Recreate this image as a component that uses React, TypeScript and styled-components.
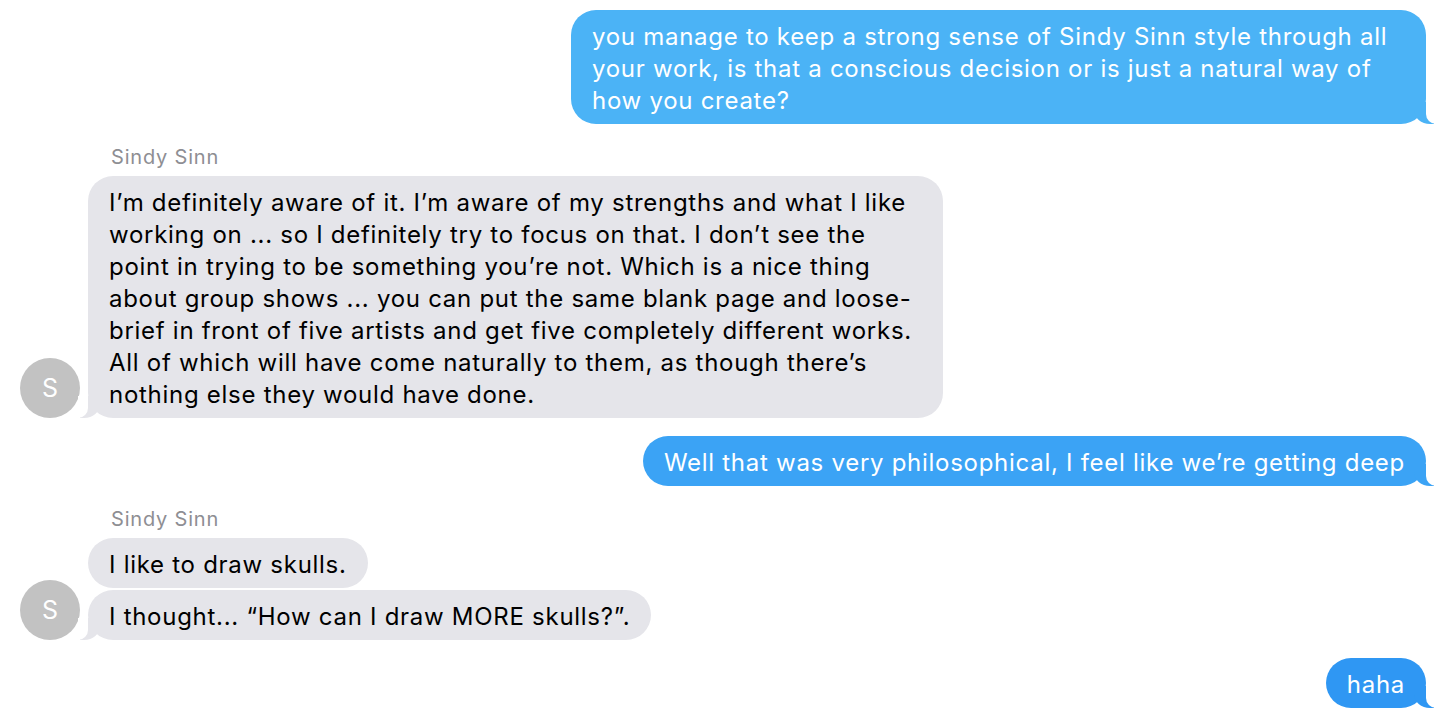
import React from "react";
import styled, { createGlobalStyle, css } from "styled-components";

const Global = createGlobalStyle`
  html, body { margin: 0; padding: 0; background: #ffffff; }
  body { font-family: Inter, "Liberation Sans", Arial, sans-serif; -webkit-font-smoothing: antialiased; }
`;

const Thread = styled.div`
  display: flex;
  flex-direction: column;
  padding: 10px 28px 16px 20px;
  width: 1454px;
  box-sizing: border-box;
`;

const SentRow = styled.div<{ $mt: number }>`
  display: flex;
  justify-content: flex-end;
  margin-top: ${(p) => p.$mt}px;
`;

const Group = styled.div<{ $mt: number }>`
  display: grid;
  grid-template-columns: 60px 1fr;
  column-gap: 8px;
  margin-top: ${(p) => p.$mt}px;
`;

const Name = styled.div`
  grid-column: 2;
  padding-left: 23px;
  font-size: 20px;
  line-height: 24px;
  letter-spacing: 0.8px;
  color: #8e8e93;
  margin-bottom: 7px;
`;

const Stack = styled.div`
  grid-column: 2;
  grid-row: 2;
  display: flex;
  flex-direction: column;
  align-items: flex-start;
  gap: 2px;
`;

const Avatar = styled.div`
  grid-column: 1;
  grid-row: 2;
  align-self: end;
  width: 60px;
  height: 60px;
  border-radius: 50%;
  background: #c2c2c2;
  color: #ffffff;
  display: flex;
  align-items: center;
  justify-content: center;
  font-size: 25px;
  line-height: 1;
`;

const Bubble = styled.div<{ $sent?: boolean; $tail?: boolean; $bg: string; $w?: number }>`
  position: relative;
  box-sizing: border-box;
  padding: 11px 21px 7px;
  border-radius: 25px;
  font-size: 24px;
  line-height: 32px;
  letter-spacing: 0.72px;
  background: ${(p) => p.$bg};
  color: ${(p) => (p.$sent ? "#ffffff" : "#000000")};
  white-space: nowrap;
  ${(p) => (p.$w ? `width: ${p.$w}px;` : "")}
  ${(p) =>
    p.$tail &&
    (p.$sent
      ? css`
          &::before {
            content: "";
            position: absolute;
            bottom: 0;
            right: -8px;
            width: 20px;
            height: 22px;
            background: ${p.$bg};
            border-bottom-left-radius: 16px 14px;
          }
          &::after {
            content: "";
            position: absolute;
            bottom: 0;
            right: -10px;
            width: 10px;
            height: 22px;
            background: #ffffff;
            border-bottom-left-radius: 10px;
          }
        `
      : css`
          &::before {
            content: "";
            position: absolute;
            bottom: 0;
            left: -8px;
            width: 20px;
            height: 22px;
            background: ${p.$bg};
            border-bottom-right-radius: 16px 14px;
          }
          &::after {
            content: "";
            position: absolute;
            bottom: 0;
            left: -10px;
            width: 10px;
            height: 22px;
            background: #ffffff;
            border-bottom-right-radius: 10px;
          }
        `)}
`;

const Line = styled.span`
  display: block;
`;

const GRAY = "#e5e5ea";

const Lines = ({ lines }: { lines: string[] }) => (
  <>
    {lines.map((l, i) => (
      <Line key={i}>{l}</Line>
    ))}
  </>
);

export default function App() {
  return (
    <>
      <Global />
      <Thread>
        <SentRow $mt={0}>
          <Bubble $sent $tail $bg="#4bb3f6" $w={855}>
            <Lines
              lines={[
                "you manage to keep a strong sense of Sindy Sinn style through all",
                "your work, is that a conscious decision or is just a natural way of",
                "how you create?",
              ]}
            />
          </Bubble>
        </SentRow>

        <Group $mt={21}>
          <Name>Sindy Sinn</Name>
          <Stack>
            <Bubble $tail $bg={GRAY} $w={855}>
              <Lines
                lines={[
                  "I’m definitely aware of it. I’m aware of my strengths and what I like",
                  "working on ... so I definitely try to focus on that. I don’t see the",
                  "point in trying to be something you’re not. Which is a nice thing",
                  "about group shows ... you can put the same blank page and loose-",
                  "brief in front of five artists and get five completely different works.",
                  "All of which will have come naturally to them, as though there’s",
                  "nothing else they would have done.",
                ]}
              />
            </Bubble>
          </Stack>
          <Avatar>S</Avatar>
        </Group>

        <SentRow $mt={18}>
          <Bubble $sent $tail $bg="#3ba3f5">
            Well that was very philosophical, I feel like we’re getting deep
          </Bubble>
        </SentRow>

        <Group $mt={21}>
          <Name>Sindy Sinn</Name>
          <Stack>
            <Bubble $bg={GRAY}>I like to draw skulls.</Bubble>
            <Bubble $tail $bg={GRAY}>
              I thought... “How can I draw MORE skulls?”.
            </Bubble>
          </Stack>
          <Avatar>S</Avatar>
        </Group>

        <SentRow $mt={18}>
          <Bubble $sent $tail $bg="#2f97f3">
            haha
          </Bubble>
        </SentRow>
      </Thread>
    </>
  );
}
